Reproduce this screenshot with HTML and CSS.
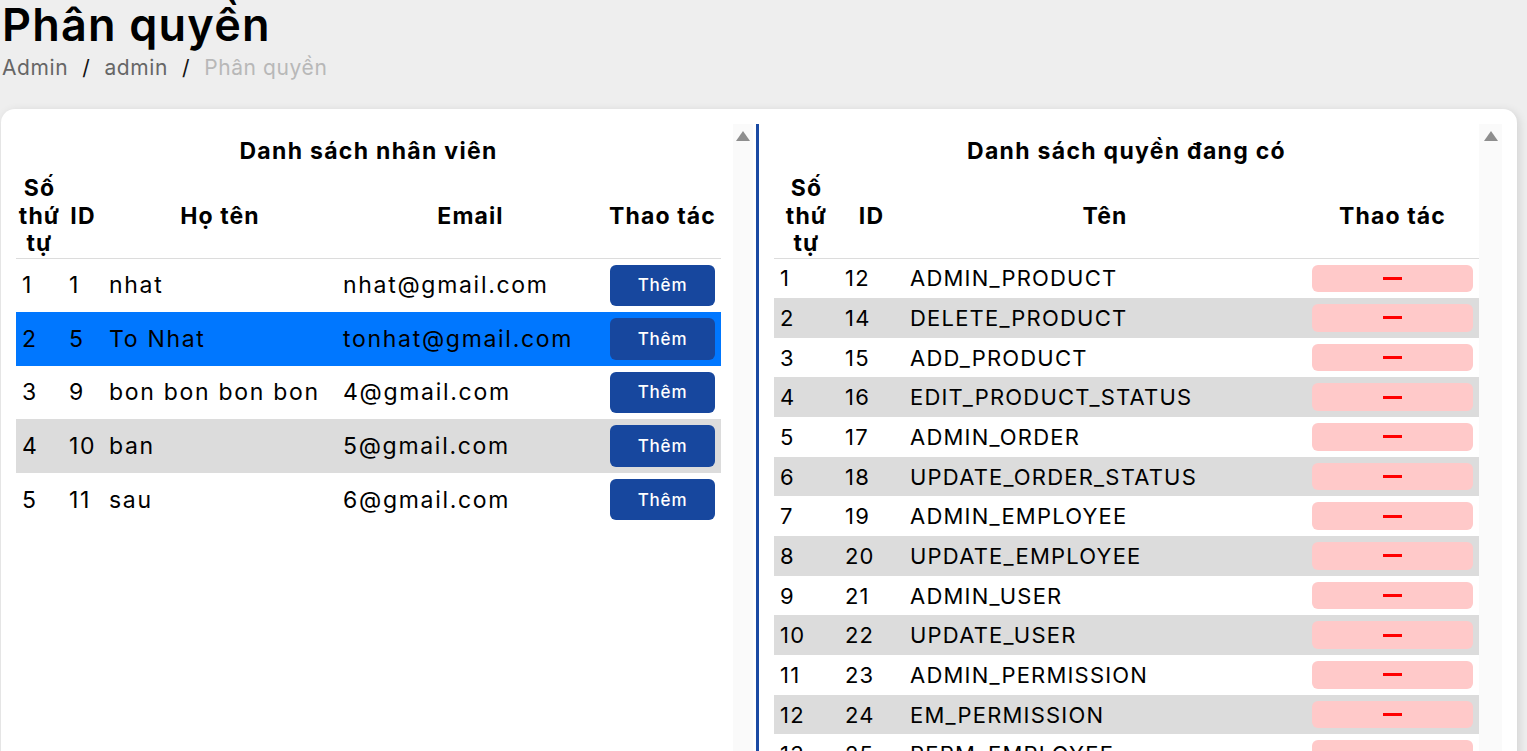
FILE: index.html
```html
<!DOCTYPE html>
<html lang="vi">
<head>
<meta charset="utf-8">
<title>Phân quyền</title>
<link rel="stylesheet" href="styles.css">
</head>
<body>
<div class="page">
  <h1 class="title">Phân quyền</h1>
  <nav class="crumbs">
    <span class="crumb">Admin</span><span class="sep">/</span>
    <span class="crumb">admin</span><span class="sep">/</span>
    <span class="crumb current">Phân quyền</span>
  </nav>

  <section class="card">
    <div class="pane pane-left">
      <table class="grid grid-staff">
        <caption>Danh sách nhân viên</caption>
        <colgroup><col class="c-stt"><col class="c-id"><col class="c-name"><col class="c-mail"><col class="c-act"></colgroup>
        <thead>
          <tr><th>Số thứ tự</th><th>ID</th><th>Họ tên</th><th>Email</th><th>Thao tác</th></tr>
        </thead>
        <tbody>
          <tr><td>1</td><td>1</td><td>nhat</td><td>nhat@gmail.com</td><td><button class="btn-add">Thêm</button></td></tr>
          <tr class="selected"><td>2</td><td>5</td><td>To Nhat</td><td>tonhat@gmail.com</td><td><button class="btn-add">Thêm</button></td></tr>
          <tr><td>3</td><td>9</td><td>bon bon bon bon</td><td>4@gmail.com</td><td><button class="btn-add">Thêm</button></td></tr>
          <tr><td>4</td><td>10</td><td>ban</td><td>5@gmail.com</td><td><button class="btn-add">Thêm</button></td></tr>
          <tr><td>5</td><td>11</td><td>sau</td><td>6@gmail.com</td><td><button class="btn-add">Thêm</button></td></tr>
        </tbody>
      </table>
      <div class="scrollbar sb-left"><span class="sb-arrow"></span></div>
      <div class="divider"></div>
    </div>

    <div class="pane pane-right">
      <table class="grid grid-perm">
        <caption>Danh sách quyền đang có</caption>
        <colgroup><col class="p-stt"><col class="p-id"><col class="p-name"><col class="p-act"></colgroup>
        <thead>
          <tr><th>Số thứ tự</th><th>ID</th><th>Tên</th><th>Thao tác</th></tr>
        </thead>
        <tbody>
          <tr><td>1</td><td>12</td><td>ADMIN_PRODUCT</td><td><button class="btn-remove"><span class="minus"></span></button></td></tr>
          <tr><td>2</td><td>14</td><td>DELETE_PRODUCT</td><td><button class="btn-remove"><span class="minus"></span></button></td></tr>
          <tr><td>3</td><td>15</td><td>ADD_PRODUCT</td><td><button class="btn-remove"><span class="minus"></span></button></td></tr>
          <tr><td>4</td><td>16</td><td>EDIT_PRODUCT_STATUS</td><td><button class="btn-remove"><span class="minus"></span></button></td></tr>
          <tr><td>5</td><td>17</td><td>ADMIN_ORDER</td><td><button class="btn-remove"><span class="minus"></span></button></td></tr>
          <tr><td>6</td><td>18</td><td>UPDATE_ORDER_STATUS</td><td><button class="btn-remove"><span class="minus"></span></button></td></tr>
          <tr><td>7</td><td>19</td><td>ADMIN_EMPLOYEE</td><td><button class="btn-remove"><span class="minus"></span></button></td></tr>
          <tr><td>8</td><td>20</td><td>UPDATE_EMPLOYEE</td><td><button class="btn-remove"><span class="minus"></span></button></td></tr>
          <tr><td>9</td><td>21</td><td>ADMIN_USER</td><td><button class="btn-remove"><span class="minus"></span></button></td></tr>
          <tr><td>10</td><td>22</td><td>UPDATE_USER</td><td><button class="btn-remove"><span class="minus"></span></button></td></tr>
          <tr><td>11</td><td>23</td><td>ADMIN_PERMISSION</td><td><button class="btn-remove"><span class="minus"></span></button></td></tr>
          <tr><td>12</td><td>24</td><td>EM_PERMISSION</td><td><button class="btn-remove"><span class="minus"></span></button></td></tr>
          <tr><td>13</td><td>25</td><td>PERM_EMPLOYEE</td><td><button class="btn-remove"><span class="minus"></span></button></td></tr>
        </tbody>
      </table>
      <div class="scrollbar sb-right"><span class="sb-arrow"></span></div>
    </div>
  </section>
</div>
</body>
</html>
```

FILE: styles.css
```css
html, body {
  margin: 0;
  padding: 0;
  overflow: hidden;
  background: #eeeeee;
  font-family: Inter, "Noto Sans", "DejaVu Sans", sans-serif;
  color: #000;
}

.page {
  padding: 0 10px 0 1px;
}

.title {
  margin: 0 0 0 1px;
  padding-top: 1px;
  font-size: 45px;
  line-height: 47px;
  font-weight: 600;
  letter-spacing: 1.2px;
}

.crumbs {
  display: flex;
  align-items: center;
  margin: 6px 0 0 1px;
  font-size: 21px;
  line-height: 28px;
  letter-spacing: 0.6px;
}

.crumb { color: #666; }
.crumb.current { color: #b8b8b8; }
.sep { color: #111; padding: 0 14px; }

.card {
  margin-top: 27px;
  height: 700px;
  background: #fff;
  border-radius: 14px;
  box-shadow: 2px 2px 10px rgba(0, 0, 0, 0.12);
  padding: 15px 15px 0 15px;
  display: flex;
  overflow: hidden;
}

.pane {
  width: 743px;
  flex: none;
  display: flex;
  align-items: stretch;
}

.pane-right { padding-left: 15px; width: 728px; }

.grid {
  width: 705px;
  flex: none;
  align-self: flex-start;
  border-collapse: collapse;
  table-layout: fixed;
}

.grid caption {
  font-size: 23px;
  font-weight: 700;
  line-height: 47px;
  padding-top: 4px;
  letter-spacing: 1.3px;
  text-align: center;
}

.grid th {
  font-size: 23px;
  font-weight: 700;
  line-height: 27.5px;
  letter-spacing: 1.1px;
  padding: 0 2px;
  text-align: center;
  vertical-align: middle;
  border-bottom: 1px solid #dcdcdc;
}

.grid td {
  font-size: 22px;
  font-weight: 400;
  line-height: 26px;
  letter-spacing: 1.2px;
  padding: 6px;
  vertical-align: middle;
  white-space: nowrap;
}

.grid-staff td {
  font-size: 23px;
  letter-spacing: 1.7px;
}

.grid tbody tr:nth-child(even) { background: #dcdcdc; }
.grid tbody tr.selected { background: #0077ff; }

.c-stt { width: 47px; }
.c-id { width: 40px; }
.c-name { width: 234px; }
.c-mail { width: 267px; }
.c-act { width: 117px; }

.p-stt { width: 65px; }
.p-id { width: 65px; }
.p-name { width: 402px; }
.p-act { width: 173px; }

.btn-add {
  display: block;
  width: 100%;
  height: 41.6px;
  border: none;
  border-radius: 6px;
  background: #17479e;
  color: #fff;
  font-family: inherit;
  font-size: 17px;
  font-weight: 500;
  letter-spacing: 0.8px;
}

.btn-remove {
  display: flex;
  align-items: center;
  justify-content: center;
  width: 100%;
  height: 27.67px;
  border: none;
  border-radius: 6px;
  background: #ffc9c9;
  padding: 0;
}

.minus {
  display: block;
  width: 19px;
  height: 3px;
  background: #ff0000;
}

.scrollbar {
  flex: none;
  background: #fafafa;
  display: flex;
  justify-content: center;
  padding-top: 7px;
  box-sizing: border-box;
}

.sb-left { width: 20px; margin-left: 12px; }
.sb-right { width: 23px; }

.sb-arrow {
  width: 0;
  height: 0;
  border-left: 7px solid transparent;
  border-right: 7px solid transparent;
  border-bottom: 10px solid #8e8e8e;
}

.divider {
  flex: none;
  width: 3px;
  margin-left: 3px;
  background: #1a4aa3;
}
```
